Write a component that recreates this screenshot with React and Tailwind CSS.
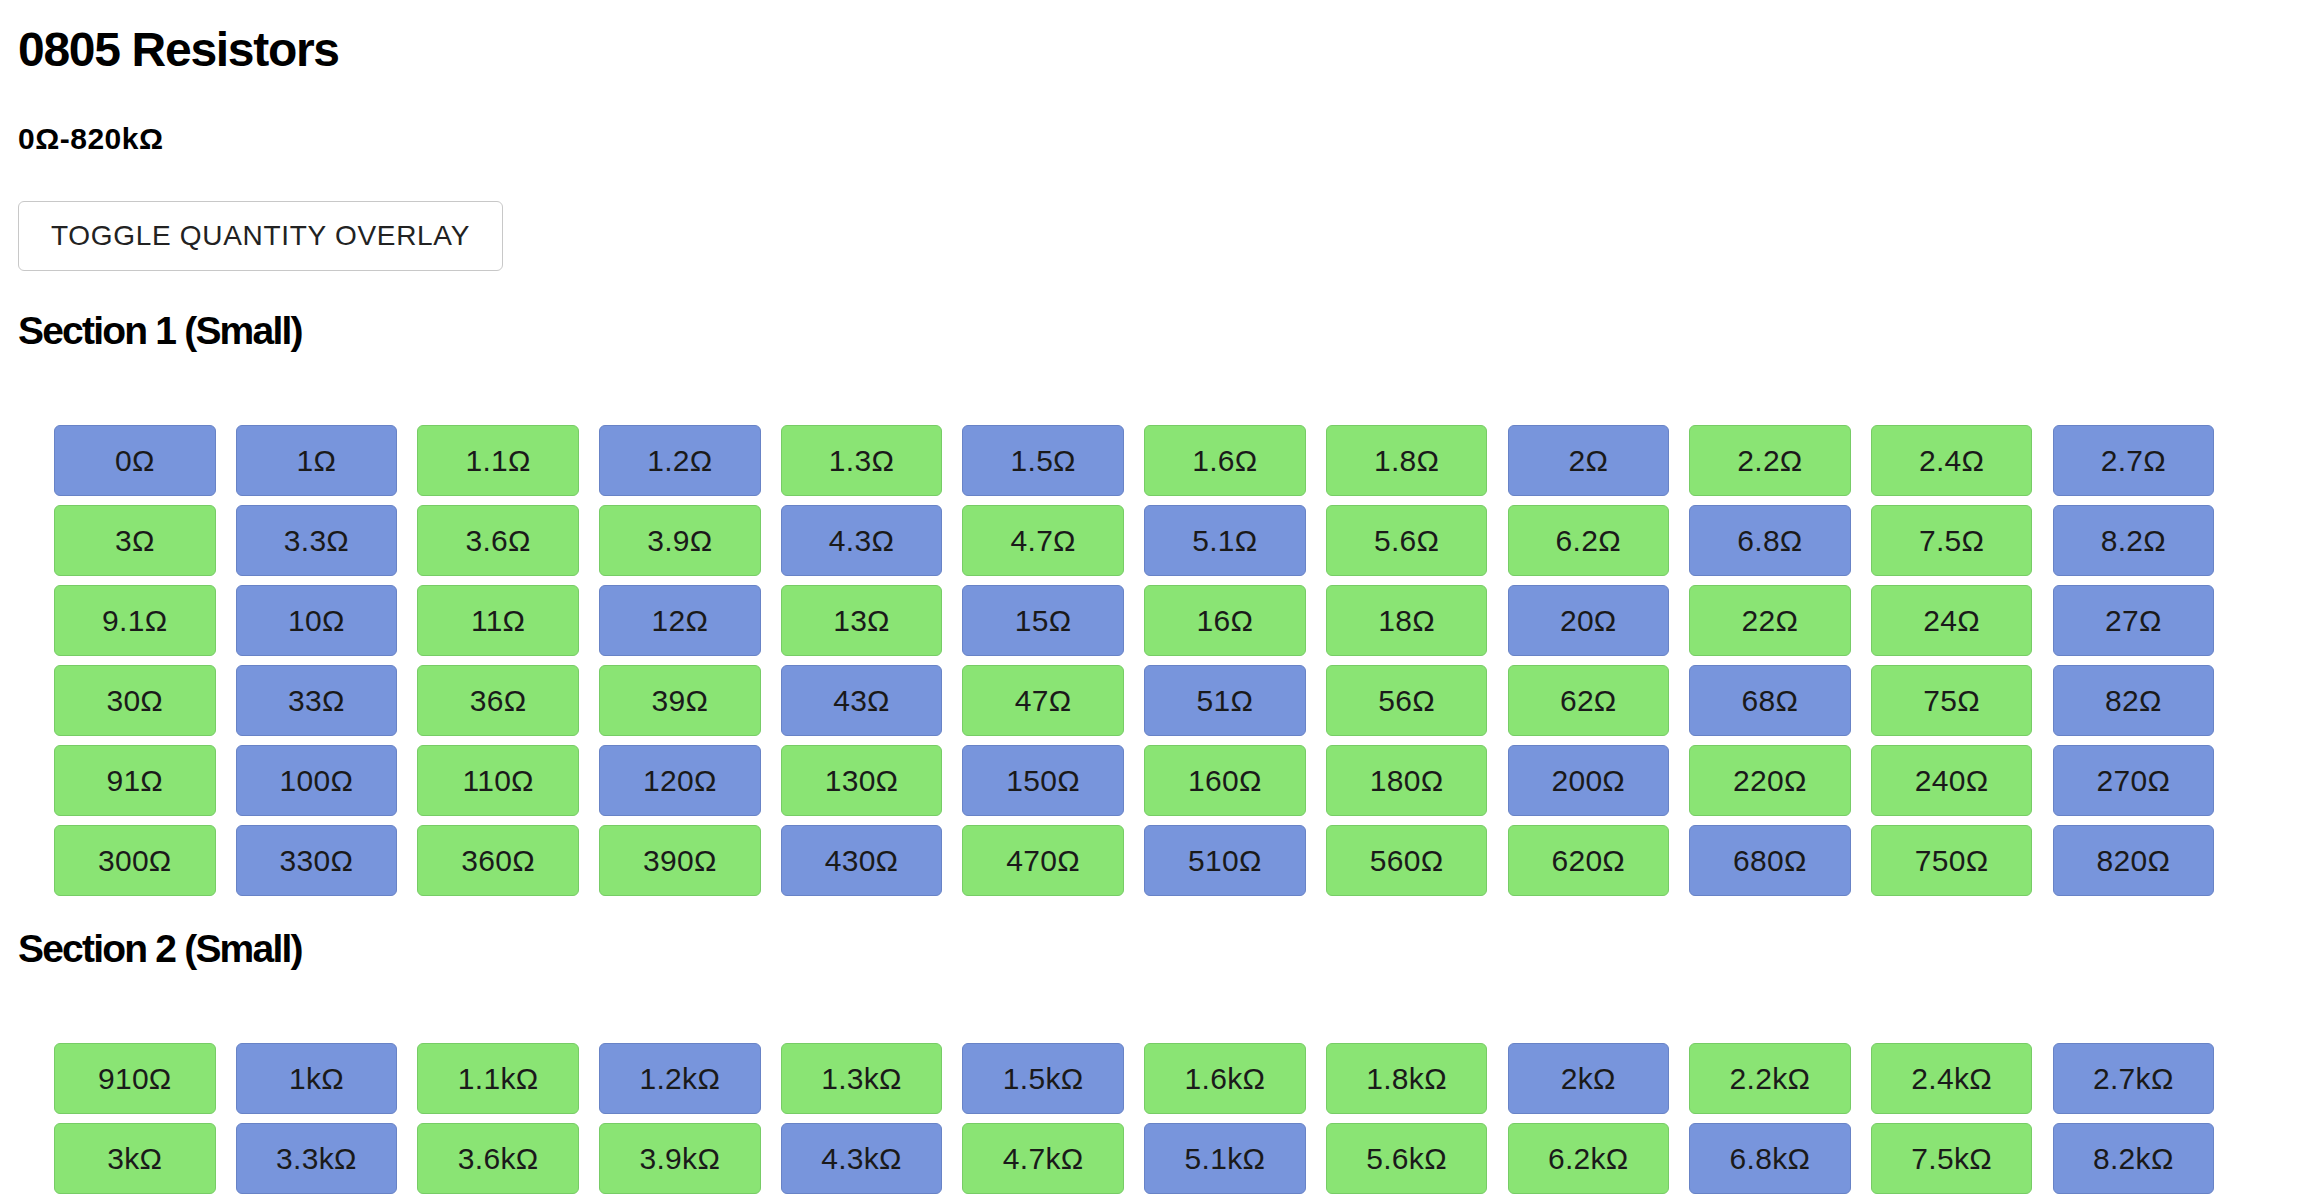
const B = 'b';
const G = 'g';

// value + colour per cell, in row order (12 per row)
const section1 = [
  [['0Ω', B], ['1Ω', B], ['1.1Ω', G], ['1.2Ω', B], ['1.3Ω', G], ['1.5Ω', B], ['1.6Ω', G], ['1.8Ω', G], ['2Ω', B], ['2.2Ω', G], ['2.4Ω', G], ['2.7Ω', B]],
  [['3Ω', G], ['3.3Ω', B], ['3.6Ω', G], ['3.9Ω', G], ['4.3Ω', B], ['4.7Ω', G], ['5.1Ω', B], ['5.6Ω', G], ['6.2Ω', G], ['6.8Ω', B], ['7.5Ω', G], ['8.2Ω', B]],
  [['9.1Ω', G], ['10Ω', B], ['11Ω', G], ['12Ω', B], ['13Ω', G], ['15Ω', B], ['16Ω', G], ['18Ω', G], ['20Ω', B], ['22Ω', G], ['24Ω', G], ['27Ω', B]],
  [['30Ω', G], ['33Ω', B], ['36Ω', G], ['39Ω', G], ['43Ω', B], ['47Ω', G], ['51Ω', B], ['56Ω', G], ['62Ω', G], ['68Ω', B], ['75Ω', G], ['82Ω', B]],
  [['91Ω', G], ['100Ω', B], ['110Ω', G], ['120Ω', B], ['130Ω', G], ['150Ω', B], ['160Ω', G], ['180Ω', G], ['200Ω', B], ['220Ω', G], ['240Ω', G], ['270Ω', B]],
  [['300Ω', G], ['330Ω', B], ['360Ω', G], ['390Ω', G], ['430Ω', B], ['470Ω', G], ['510Ω', B], ['560Ω', G], ['620Ω', G], ['680Ω', B], ['750Ω', G], ['820Ω', B]],
];

const section2 = [
  [['910Ω', G], ['1kΩ', B], ['1.1kΩ', G], ['1.2kΩ', B], ['1.3kΩ', G], ['1.5kΩ', B], ['1.6kΩ', G], ['1.8kΩ', G], ['2kΩ', B], ['2.2kΩ', G], ['2.4kΩ', G], ['2.7kΩ', B]],
  [['3kΩ', G], ['3.3kΩ', B], ['3.6kΩ', G], ['3.9kΩ', G], ['4.3kΩ', B], ['4.7kΩ', G], ['5.1kΩ', B], ['5.6kΩ', G], ['6.2kΩ', G], ['6.8kΩ', B], ['7.5kΩ', G], ['8.2kΩ', B]],
];

const Cell = ({ label, kind }) => (
  <div
    className={`h-[71px] flex items-center justify-center rounded-[6px] border-[1.5px] text-[30px] leading-none tracking-[0.3px] text-[#1a1a1a] ${
      kind === B ? 'bg-[#7895dc] border-[#6883c6]' : 'bg-[#8ae474] border-[#77cc66]'
    }`}
  >
    {label}
  </div>
);

const Section = ({ title, rows, top }) => (
  <section>
    <h3 className={`${top} mb-[71px] text-[39px] leading-[46px] font-bold tracking-[-1.8px] text-black`}>
      {title}
    </h3>
    <div className="ml-[36px] grid grid-cols-[repeat(12,161.5px)] gap-x-[20.2px] gap-y-[9px]">
      {rows.flat().map(([label, kind]) => (
        <Cell key={label} label={label} kind={kind} />
      ))}
    </div>
  </section>
);

export default function App() {
  return (
    <div className="min-h-screen bg-white px-[18px] pt-[22px] font-['Liberation_Sans',Arial,sans-serif]">
      <h1 className="text-[48px] leading-[56px] font-bold tracking-[-1.3px] text-black">0805 Resistors</h1>
      <h4 className="mt-[43px] text-[30px] leading-[36px] font-bold tracking-[0.5px] text-black">0Ω-820kΩ</h4>

      <button
        className="mt-[44px] h-[70px] w-[485px] rounded-[6px] border-[1.5px] border-[#c8c8c8] bg-white text-[28px] tracking-[0.7px] text-[#222]"
      >
        TOGGLE QUANTITY OVERLAY
      </button>

      <Section title="Section 1 (Small)" rows={section1} top="mt-[37px]" />
      <Section title="Section 2 (Small)" rows={section2} top="mt-[30px]" />
    </div>
  );
}
